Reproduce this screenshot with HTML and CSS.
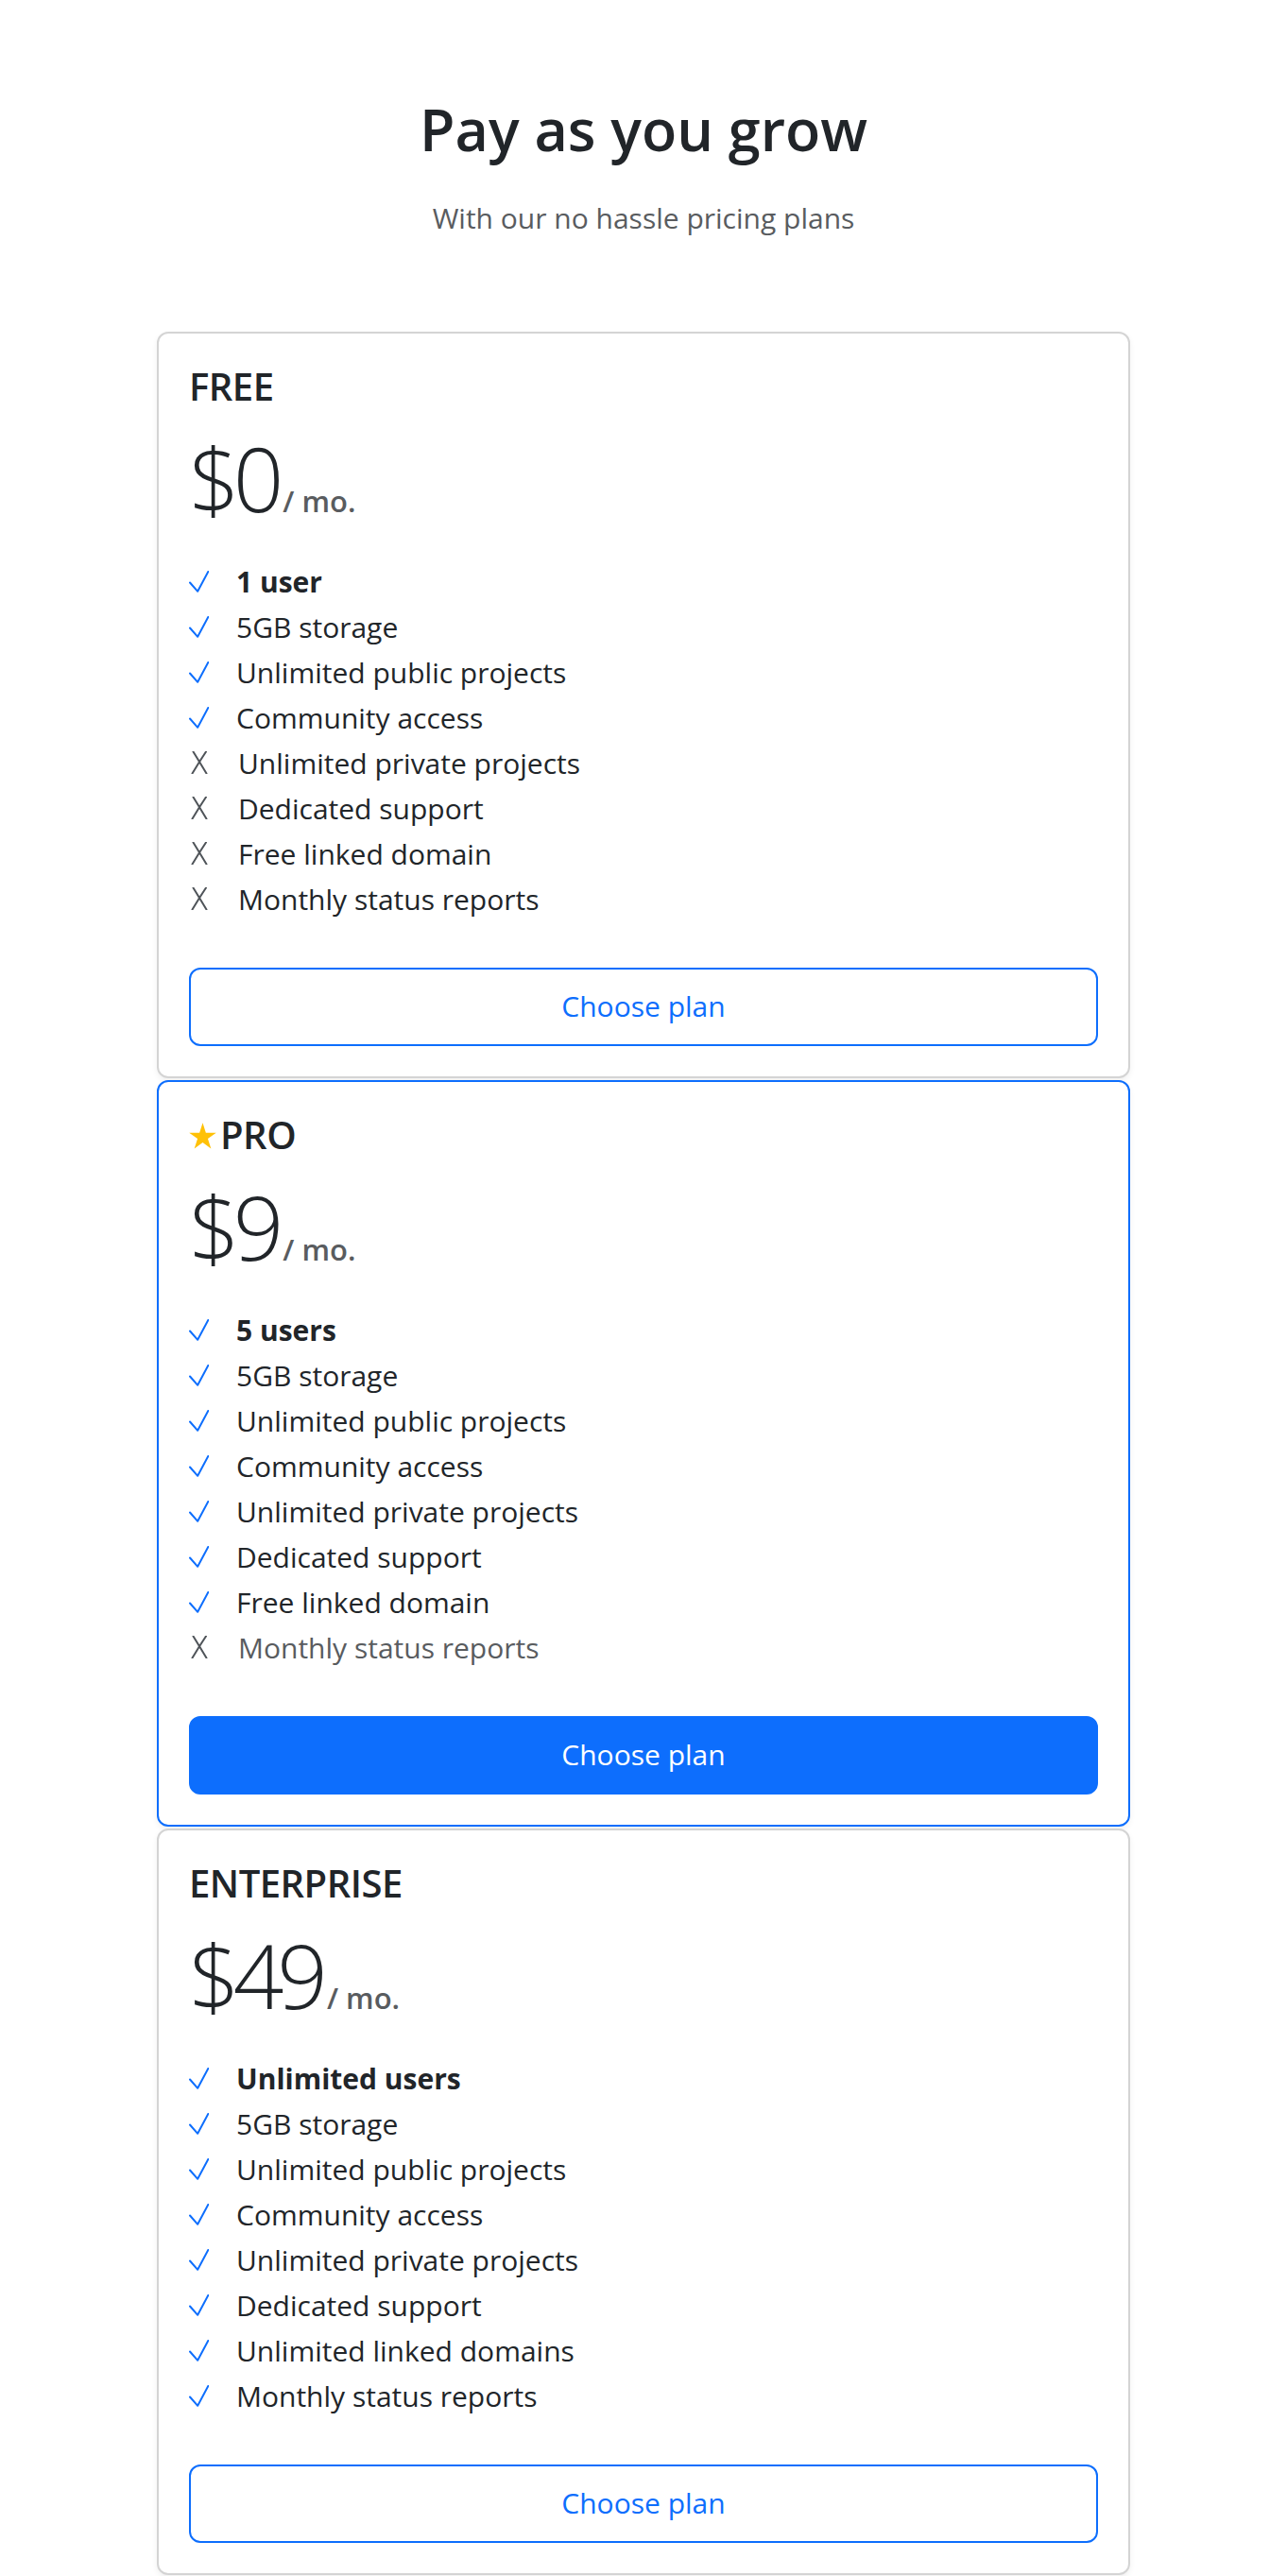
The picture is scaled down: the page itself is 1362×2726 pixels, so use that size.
FILE: index.html
```html
<!DOCTYPE html>
<html lang="en">
<head>
<meta charset="utf-8">
<title>Pricing</title>
<link rel="stylesheet" href="styles.css">
</head>
<body>
<header class="hero">
  <h1 class="hero-title">Pay as you grow</h1>
  <p class="hero-sub">With our no hassle pricing plans</p>
</header>
<main class="plans">
  <section class="plan">
    <h2 class="plan-name">FREE</h2>
    <div class="plan-price"><span class="amount">$0</span><span class="per">/ mo.</span></div>
    <ul class="features">
      <li class="yes"><svg class="mark-yes" viewBox="0 0 21 23"><path d="M1 12.5L9.2 21.8L20.3 1"/></svg><strong>1 user</strong></li>
      <li class="yes"><svg class="mark-yes" viewBox="0 0 21 23"><path d="M1 12.5L9.2 21.8L20.3 1"/></svg>5GB storage</li>
      <li class="yes"><svg class="mark-yes" viewBox="0 0 21 23"><path d="M1 12.5L9.2 21.8L20.3 1"/></svg>Unlimited public projects</li>
      <li class="yes"><svg class="mark-yes" viewBox="0 0 21 23"><path d="M1 12.5L9.2 21.8L20.3 1"/></svg>Community access</li>
      <li class="no"><svg class="mark-no" viewBox="0 0 18 24"><path d="M2.5 0.5Q9 11 16.5 23.5M16 0.5Q9 11 1.5 23.5"/></svg>Unlimited private projects</li>
      <li class="no"><svg class="mark-no" viewBox="0 0 18 24"><path d="M2.5 0.5Q9 11 16.5 23.5M16 0.5Q9 11 1.5 23.5"/></svg>Dedicated support</li>
      <li class="no"><svg class="mark-no" viewBox="0 0 18 24"><path d="M2.5 0.5Q9 11 16.5 23.5M16 0.5Q9 11 1.5 23.5"/></svg>Free linked domain</li>
      <li class="no"><svg class="mark-no" viewBox="0 0 18 24"><path d="M2.5 0.5Q9 11 16.5 23.5M16 0.5Q9 11 1.5 23.5"/></svg>Monthly status reports</li>
    </ul>
    <button class="btn btn-outline" type="button">Choose plan</button>
  </section>

  <section class="plan plan-featured">
    <h2 class="plan-name"><svg class="star" viewBox="0 0 29 28"><polygon points="14.5,0.3 17.87,10.66 28.77,10.66 19.95,17.07 23.32,27.44 14.5,21.03 5.68,27.44 9.05,17.07 0.23,10.66 11.13,10.66"/></svg>PRO</h2>
    <div class="plan-price"><span class="amount">$9</span><span class="per">/ mo.</span></div>
    <ul class="features">
      <li class="yes"><svg class="mark-yes" viewBox="0 0 21 23"><path d="M1 12.5L9.2 21.8L20.3 1"/></svg><strong>5 users</strong></li>
      <li class="yes"><svg class="mark-yes" viewBox="0 0 21 23"><path d="M1 12.5L9.2 21.8L20.3 1"/></svg>5GB storage</li>
      <li class="yes"><svg class="mark-yes" viewBox="0 0 21 23"><path d="M1 12.5L9.2 21.8L20.3 1"/></svg>Unlimited public projects</li>
      <li class="yes"><svg class="mark-yes" viewBox="0 0 21 23"><path d="M1 12.5L9.2 21.8L20.3 1"/></svg>Community access</li>
      <li class="yes"><svg class="mark-yes" viewBox="0 0 21 23"><path d="M1 12.5L9.2 21.8L20.3 1"/></svg>Unlimited private projects</li>
      <li class="yes"><svg class="mark-yes" viewBox="0 0 21 23"><path d="M1 12.5L9.2 21.8L20.3 1"/></svg>Dedicated support</li>
      <li class="yes"><svg class="mark-yes" viewBox="0 0 21 23"><path d="M1 12.5L9.2 21.8L20.3 1"/></svg>Free linked domain</li>
      <li class="no muted"><svg class="mark-no" viewBox="0 0 18 24"><path d="M2.5 0.5Q9 11 16.5 23.5M16 0.5Q9 11 1.5 23.5"/></svg>Monthly status reports</li>
    </ul>
    <button class="btn btn-primary" type="button">Choose plan</button>
  </section>

  <section class="plan">
    <h2 class="plan-name">ENTERPRISE</h2>
    <div class="plan-price"><span class="amount">$49</span><span class="per">/ mo.</span></div>
    <ul class="features">
      <li class="yes"><svg class="mark-yes" viewBox="0 0 21 23"><path d="M1 12.5L9.2 21.8L20.3 1"/></svg><strong>Unlimited users</strong></li>
      <li class="yes"><svg class="mark-yes" viewBox="0 0 21 23"><path d="M1 12.5L9.2 21.8L20.3 1"/></svg>5GB storage</li>
      <li class="yes"><svg class="mark-yes" viewBox="0 0 21 23"><path d="M1 12.5L9.2 21.8L20.3 1"/></svg>Unlimited public projects</li>
      <li class="yes"><svg class="mark-yes" viewBox="0 0 21 23"><path d="M1 12.5L9.2 21.8L20.3 1"/></svg>Community access</li>
      <li class="yes"><svg class="mark-yes" viewBox="0 0 21 23"><path d="M1 12.5L9.2 21.8L20.3 1"/></svg>Unlimited private projects</li>
      <li class="yes"><svg class="mark-yes" viewBox="0 0 21 23"><path d="M1 12.5L9.2 21.8L20.3 1"/></svg>Dedicated support</li>
      <li class="yes"><svg class="mark-yes" viewBox="0 0 21 23"><path d="M1 12.5L9.2 21.8L20.3 1"/></svg>Unlimited linked domains</li>
      <li class="yes"><svg class="mark-yes" viewBox="0 0 21 23"><path d="M1 12.5L9.2 21.8L20.3 1"/></svg>Monthly status reports</li>
    </ul>
    <button class="btn btn-outline" type="button">Choose plan</button>
  </section>
</main>
</body>
</html>
```
FILE: styles.css
```css
html, body {
  margin: 0;
  padding: 0;
  background: #ffffff;
}

body {
  font-family: "Open Sans", "Noto Sans", "DejaVu Sans", sans-serif;
  color: #212529;
}

.hero {
  text-align: center;
  padding-top: 100px;
}

.hero-title {
  margin: 0;
  font-size: 61px;
  line-height: 74px;
  font-weight: 600;
  color: #212529;
}

.hero-sub {
  margin: 34px 0 0;
  font-size: 30px;
  line-height: 45px;
  font-weight: 400;
  color: #595c5f;
}

.plans {
  width: 1030px;
  margin: 98px auto 0;
}

.plan {
  box-sizing: border-box;
  height: 790px;
  border: 2px solid #d4d4d4;
  border-radius: 12px;
  padding: 32px;
  margin-bottom: 2px;
  background: #fff;
  box-shadow: 0 3px 6px rgba(0, 0, 0, 0.06);
}

.plan-featured {
  border-color: #0d6efd;
}

.plan-name {
  margin: 0;
  font-size: 40px;
  line-height: 48px;
  font-weight: 600;
  letter-spacing: -0.5px;
  color: #212529;
}

.star {
  width: 29px;
  height: 28px;
  fill: #ffc107;
  margin-right: 4px;
  vertical-align: baseline;
}

.plan-price {
  margin-top: 18px;
  font-size: 94px;
  font-weight: 300;
  line-height: 110px;
  white-space: nowrap;
}

.amount {
  font-size: 94px;
  font-weight: 300;
  letter-spacing: -7px;
  color: #212529;
}

.per {
  font-size: 31px;
  line-height: 1;
  font-weight: 600;
  letter-spacing: 0;
  color: #595c5f;
  margin-left: 6px;
}

.features {
  list-style: none;
  margin: 31px 0 0;
  padding: 0;
}

.features li {
  font-size: 30px;
  line-height: 48px;
  white-space: nowrap;
}

.features strong {
  font-weight: 700;
}

.mark-yes {
  width: 21px;
  height: 23px;
  margin-right: 29px;
  vertical-align: baseline;
  fill: none;
  stroke: #0d6efd;
  stroke-width: 2;
  stroke-linecap: round;
  stroke-linejoin: round;
}

.mark-no {
  width: 18px;
  height: 24px;
  margin-left: 2px;
  margin-right: 32px;
  vertical-align: baseline;
  fill: none;
  stroke: #4f5459;
  stroke-width: 2;
  stroke-linecap: round;
}

.features li.muted {
  color: #595c5f;
}

.btn {
  display: block;
  box-sizing: border-box;
  width: 100%;
  margin-top: 48px;
  height: 83px;
  padding: 16px 24px 18px;
  font-family: inherit;
  font-size: 30px;
  line-height: 45px;
  font-weight: 400;
  text-align: center;
  border: 2px solid #0d6efd;
  border-radius: 12px;
  cursor: pointer;
}

.btn-outline {
  background: #ffffff;
  color: #0d6efd;
}

.btn-primary {
  background: #0d6efd;
  color: #ffffff;
}
```
